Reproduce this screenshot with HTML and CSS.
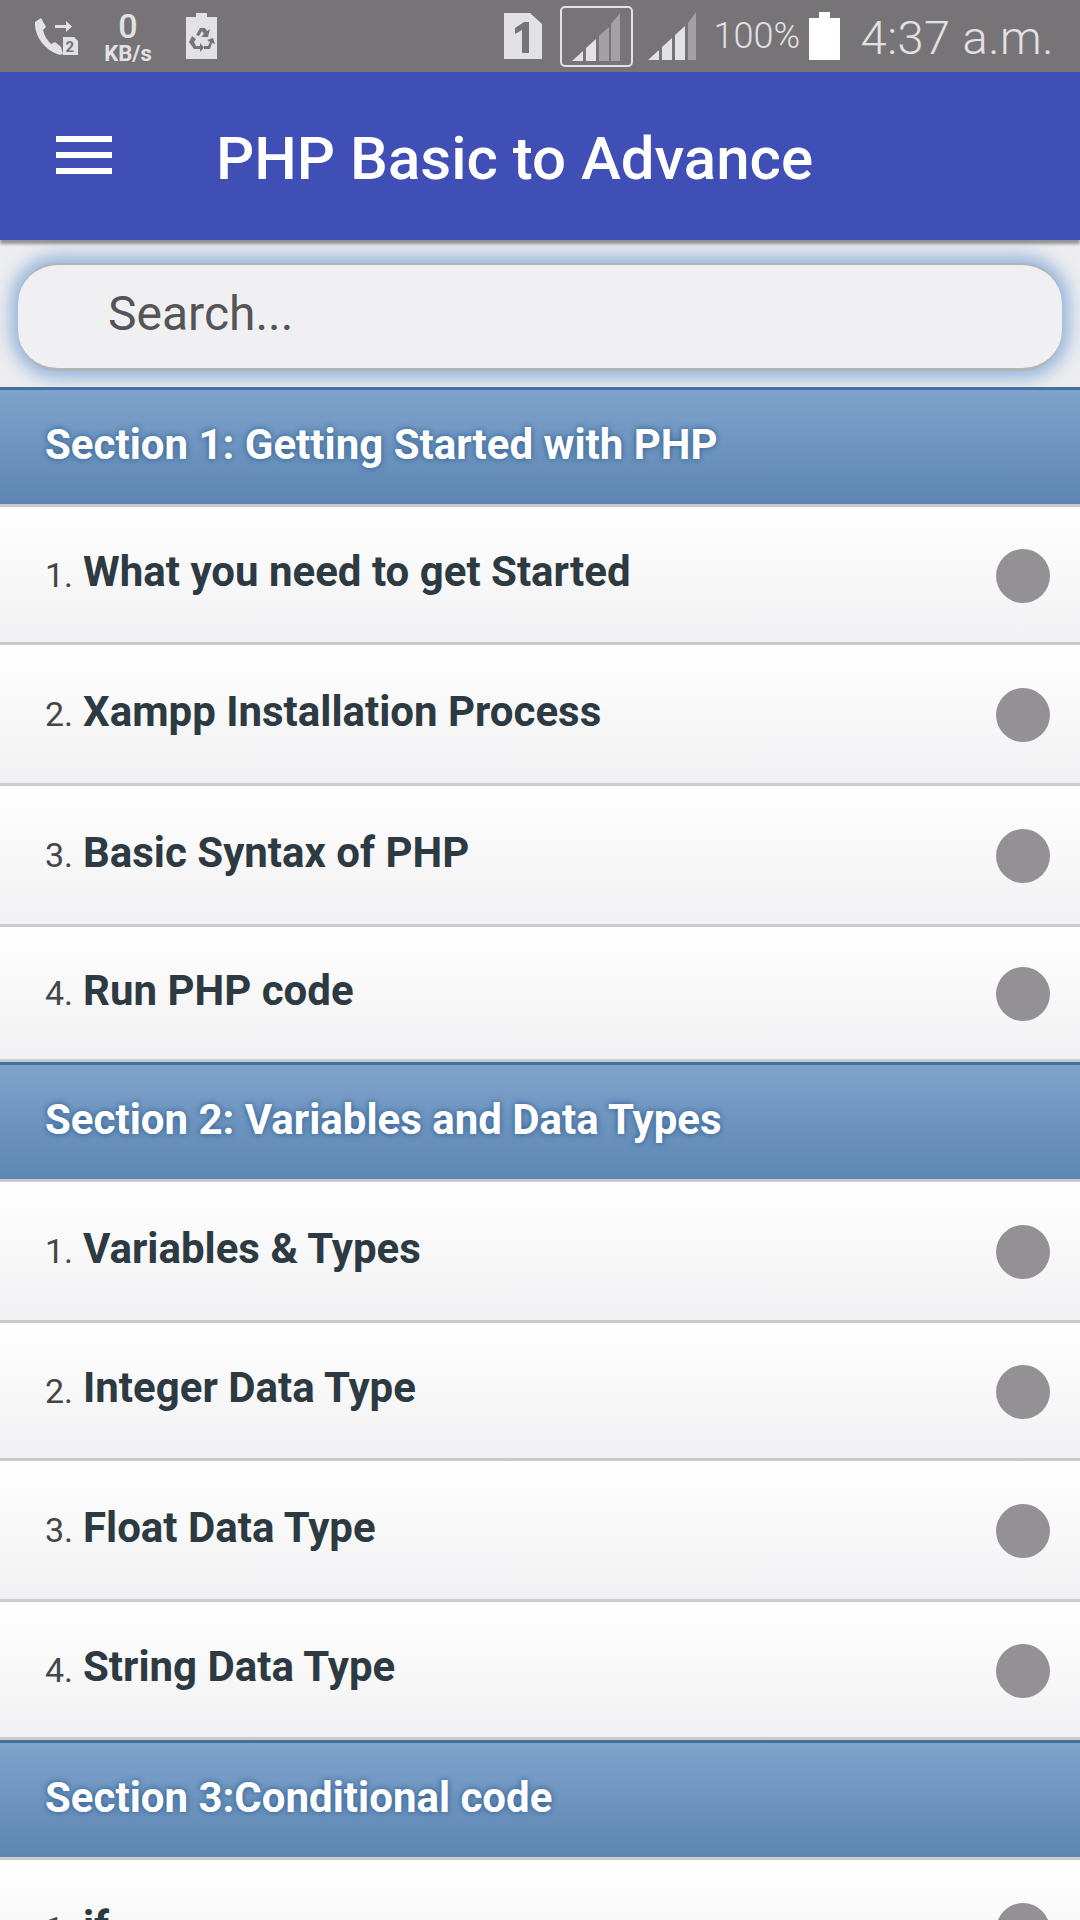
FILE: index.html
```html
<!DOCTYPE html>
<html lang="en">
<head>
<meta charset="utf-8">
<title>PHP Basic to Advance</title>
<link rel="stylesheet" href="styles.css">
</head>
<body>
<div class="screen">
  <header class="status">
    <div class="status-left">
      <svg class="ic-call" viewBox="0 0 44 40"><path d="M6 1 L0 5 C-1 18 9 32 22 37 C24 38 26 38 28 37 L26 30 L20 25 L16 27 C12 23 9 18 8 13 L11 10 Z" fill="#e2e1e3"/><path d="M20 8 H31 V4 L37 9.500 L31 15 V11 H20 Z" fill="#e2e1e3"/><path d="M28 20 H39 L43 24 V38 H28 Z" fill="#e2e1e3"/><text x="30.500" y="35" class="sim-two">2</text></svg>
      <div class="speed"><span class="speed-num">0</span><span class="speed-unit">KB/s</span></div>
      <svg class="ic-recycle" viewBox="0 0 31 46"><path d="M10 0 H21 V4 H31 V46 H0 V4 H10 Z" fill="#e2e1e3"/><g fill="#767476"><path d="M10 22 L14 15 H19 L21 18 L24 16 L22 24 L15 24 L18 21 L16 18 L13 23 Z"/><path d="M3 29 L6 23 L10 26 L8 29 L10 33 H14 V30 L18 34.500 L14 39 V36 H8 Z"/><path d="M20 33 H24 L26 29 L23 27 L29 25 L31 31 L28 30 L26 36 H20 Z" transform="translate(-2 0)"/></g></svg>
    </div>
    <div class="status-right">
      <svg class="ic-sim" viewBox="0 0 38 46"><path d="M0 0 H26 L38 11 V46 H0 Z" fill="#e2e1e3"/><path d="M11 15 L20 9 H25 V40 H18 V17 L11 21 Z" fill="#767476"/></svg>
      <div class="signal-box">
        <svg class="ic-signal" viewBox="0 0 48 48"><path d="M0 48 L11 38 V48 Z" fill="#e2e1e3"/><path d="M14 35 L24 26 V48 H14 Z" fill="#e2e1e3"/><path d="M27 23 L37 14 V48 H27 Z" fill="#a3a1a4"/><path d="M39 11 L48 0 V48 H39 Z" fill="#a3a1a4"/></svg>
      </div>
      <svg class="ic-signal ic-signal-plain" viewBox="0 0 48 48"><path d="M0 48 L11 38 V48 Z" fill="#e2e1e3"/><path d="M14 35 L24 26 V48 H14 Z" fill="#e2e1e3"/><path d="M27 23 L37 14 V48 H27 Z" fill="#e2e1e3"/><path d="M40 11 L48 0 V48 H40 Z" fill="#a3a1a4"/></svg>
      <span class="battery-pct">100%</span>
      <svg class="ic-battery" viewBox="0 0 31 48"><path d="M10 0 H21 V6 H31 V48 H0 V6 H10 Z" fill="#fff"/></svg>
      <span class="clock">4:37 a.m.</span>
    </div>
  </header>

  <div class="appbar">
    <div class="burger"><span></span><span></span><span></span></div>
    <h1 class="appbar-title">PHP Basic to Advance</h1>
  </div>

  <div class="search-wrap">
    <div class="search">Search...</div>
  </div>

  <main class="list">
    <div class="section">Section 1: Getting Started with PHP</div>
    <div class="row row-m"><span class="num">1.</span><span class="name">What you need to get Started</span><i class="dot"></i></div>
    <div class="row row-l"><span class="num">2.</span><span class="name">Xampp Installation Process</span><i class="dot"></i></div>
    <div class="row row-l"><span class="num">3.</span><span class="name">Basic Syntax of PHP</span><i class="dot"></i></div>
    <div class="row row-s"><span class="num">4.</span><span class="name">Run PHP code</span><i class="dot"></i></div>

    <div class="section">Section 2: Variables and Data Types</div>
    <div class="row row-l"><span class="num">1.</span><span class="name">Variables &amp; Types</span><i class="dot"></i></div>
    <div class="row row-m"><span class="num">2.</span><span class="name">Integer Data Type</span><i class="dot"></i></div>
    <div class="row row-l"><span class="num">3.</span><span class="name">Float Data Type</span><i class="dot"></i></div>
    <div class="row row-m"><span class="num">4.</span><span class="name">String Data Type</span><i class="dot"></i></div>

    <div class="section">Section 3:Conditional code</div>
    <div class="row row-l"><span class="num">1.</span><span class="name">if</span><i class="dot"></i></div>
  </main>
</div>
</body>
</html>
```
FILE: styles.css
```css
* { box-sizing: border-box; }
html, body { margin: 0; padding: 0; }
body { width: 1080px; height: 1920px; overflow: hidden; font-family: Roboto, "Liberation Sans", sans-serif; background: #f1f1f3; }
.screen { width: 1080px; height: 1920px; overflow: hidden; display: flex; flex-direction: column; }

.status { height: 72px; flex: none; background: #767476; display: flex; justify-content: space-between; align-items: center; padding: 0 26px 0 35px; color: #e2e1e3; }
.status-left, .status-right { display: flex; align-items: center; }
.ic-call { width: 44px; height: 40px; margin-top: 2px; }
.sim-two { font: 700 15px Roboto, sans-serif; fill: #767476; }
.speed { display: flex; flex-direction: column; align-items: center; margin-left: 24px; width: 50px; padding-top: 2px; }
.speed-num { font-size: 34px; font-weight: 500; line-height: 30px; }
.speed-unit { font-size: 22px; font-weight: 700; line-height: 20px; margin-top: 3px; white-space: nowrap; }
.ic-recycle { width: 31px; height: 46px; margin-left: 33px; }
.ic-sim { width: 38px; height: 46px; }
.signal-box { width: 73px; height: 61px; margin-left: 18px; border: 2.500px solid #e2e1e3; border-radius: 5px; display: flex; justify-content: center; align-items: flex-end; padding-bottom: 4px; }
.ic-signal { width: 48px; height: 48px; display: block; }
.ic-signal-plain { margin-left: 15px; }
.battery-pct { font-size: 36px; font-weight: 300; margin-left: 18px; width: 84px; white-space: nowrap; }
.ic-battery { width: 31px; height: 48px; margin-left: 11px; }
.clock { font-size: 47px; font-weight: 300; margin: 2px 0 0 21px; letter-spacing: 0.500px; white-space: nowrap; }

.appbar { height: 168px; flex: none; background: #3f4fb5; display: flex; align-items: center; padding-left: 56px; position: relative; z-index: 2; box-shadow: 0 4px 3px rgba(0, 0, 0, 0.38); }
.burger { width: 56px; display: flex; flex-direction: column; gap: 10px; margin-top: -2px; }
.burger span { display: block; height: 6px; background: #fff; }
.appbar-title { margin: 6px 0 0 104px; font-size: 60px; font-weight: 500; color: #fff; line-height: 1; }

.search-wrap { height: 147px; flex: none; padding: 23px 18px 16px; background: #eeeef0; overflow: hidden; }
.search { height: 108px; background: #f0f0f2; border-radius: 40px; border-top: 2px solid #b4b3b5; border-bottom: 3px solid #b4b3b5; display: flex; align-items: center; padding: 0 0 6px 90px; font-size: 48px; color: #555557; box-shadow: 0 0 18px 7px rgba(110, 155, 210, 0.72); }

.list { display: flex; flex-direction: column; }
.section { height: 120px; flex: none; padding: 0 0 6px 45px; display: flex; align-items: center; border-top: 3px solid #44709c; border-bottom: 3px solid #cbcbce; background: linear-gradient(#7ea3cd, #5d86b2); color: #fff; font-size: 42px; font-weight: 700; text-shadow: 0 0 6px #2a5a8c; }
.row { flex: none; display: flex; align-items: center; padding: 0 30px 0 45px; border-bottom: 3px solid #cbcbce; background: linear-gradient(#ffffff, #f1f1f3); }
.row-s { height: 135px; }
.row-m { height: 138px; }
.row-l { height: 141px; }
.num { font-size: 34px; color: #444648; width: 38px; flex: none; margin-top: 0; }
.name { font-size: 42px; font-weight: 700; color: #2d3a42; flex: 1; margin-top: -6px; }
.dot { width: 54px; height: 54px; border-radius: 50%; background: #939194; flex: none; margin-top: 2px; }
```
